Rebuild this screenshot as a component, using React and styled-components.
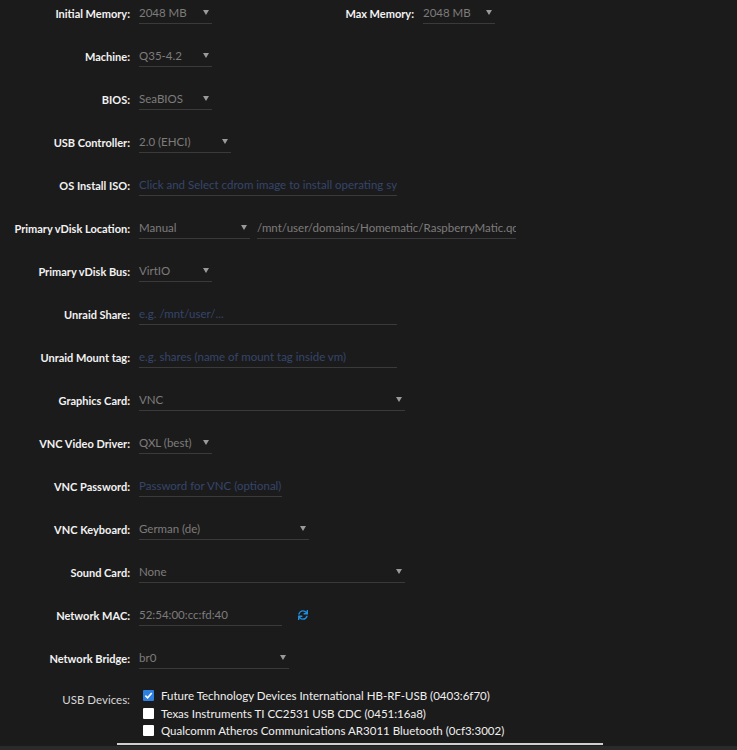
import React from "react";
import styled, { createGlobalStyle } from "styled-components";
import { FaSync } from "react-icons/fa";

const GlobalStyle = createGlobalStyle`
  html, body {
    margin: 0;
    padding: 0;
    background: #1c1b1b;
  }
  body {
    font-family: Lato, "Open Sans", sans-serif;
    font-size: 11px;
  }
`;

// whole settings panel
const Page = styled.div`
  width: 737px;
  height: 750px;
  overflow: hidden;
  background: #1c1b1b;
  display: flex;
  flex-direction: column;
`;

const Form = styled.div`
  display: flex;
  flex-direction: column;
  gap: 21px;
  padding-top: 2px;
  flex-shrink: 0;
`;

const Row = styled.div`
  display: flex;
  align-items: center;
  height: 22px;
`;

const Pair = styled.div`
  display: flex;
  align-items: center;
  height: 100%;
  margin-left: ${props => props.offset || "0px"};
`;

const Label = styled.div`
  width: ${props => props.width || "130px"};
  text-align: right;
  font-weight: 700;
  color: #f2f2f2;
  margin-right: 9px;
  white-space: nowrap;
`;

// underlined field, used for selects and text inputs
const Field = styled.div`
  position: relative;
  box-sizing: border-box;
  width: ${props => props.width};
  height: 22px;
  display: flex;
  align-items: center;
  border-bottom: 1px solid #3a3a3a;
  color: ${props => (props.placeholder ? "#34466b" : "#7c7c7c")};
  font-size: 11.5px;
  white-space: nowrap;
  overflow: hidden;
  padding-right: ${props => (props.select ? "12px" : "0")};
  margin-left: ${props => props.gap || "0"};
`;

const Caret = styled.span`
  position: absolute;
  right: 3px;
  top: 8px;
  width: 0;
  height: 0;
  border-left: 3px solid transparent;
  border-right: 3px solid transparent;
  border-top: 5px solid #9a9a9a;
`;

const Refresh = styled(FaSync)`
  color: #1f8fe0;
  font-size: 10px;
  margin-left: 16px;
`;

const DeviceRow = styled.div`
  display: flex;
  align-items: flex-start;
  margin-top: 18px;
  flex-shrink: 0;
`;

const DeviceLabel = styled.div`
  width: 130px;
  text-align: right;
  color: #d8d8d8;
  font-size: 11.5px;
  margin-right: 13px;
  padding-top: 6px;
`;

const DeviceList = styled.div`
  display: flex;
  flex-direction: column;
  gap: 2.5px;
  padding-top: 1px;
`;

const Device = styled.div`
  display: flex;
  align-items: center;
  height: 15px;
  color: #efefef;
  font-size: 11.5px;
`;

const Box = styled.span`
  box-sizing: border-box;
  width: 11px;
  height: 11px;
  margin-right: 7px;
  border-radius: 1px;
  background: ${props => (props.checked ? "#2d7fe0" : "#ffffff")};
  display: flex;
  align-items: center;
  justify-content: center;
`;

const Divider = styled.div`
  width: 486px;
  height: 2px;
  background: #cfcfcf;
  margin-left: 117px;
  margin-top: 5px;
  flex-shrink: 0;
`;

// darker strip where the next section starts
const Footer = styled.div`
  flex: 1 0 4px;
  background: #2a2a2a;
  margin-top: 1px;
`;

const Select = ({ width, children, gap }) => (
  <Field width={width} select gap={gap}>
    {children}
    <Caret />
  </Field>
);

const Check = () => (
  <svg width="9" height="9" viewBox="0 0 10 10">
    <path d="M1.5 5.2 L4 7.6 L8.6 2.2" fill="none" stroke="#fff" strokeWidth="1.8" />
  </svg>
);

const devices = [
  { name: "Future Technology Devices International HB-RF-USB (0403:6f70)", checked: true },
  { name: "Texas Instruments TI CC2531 USB CDC (0451:16a8)", checked: false },
  { name: "Qualcomm Atheros Communications AR3011 Bluetooth (0cf3:3002)", checked: false },
];

const App = () => (
  <Page>
    <GlobalStyle />
    <Form>
      <Row>
        <Pair>
          <Label>Initial Memory:</Label>
          <Select width="73px">2048 MB</Select>
        </Pair>
        <Pair offset="72px">
          <Label>Max Memory:</Label>
          <Select width="72px">2048 MB</Select>
        </Pair>
      </Row>
      <Row>
        <Label>Machine:</Label>
        <Select width="73px">Q35-4.2</Select>
      </Row>
      <Row>
        <Label>BIOS:</Label>
        <Select width="73px">SeaBIOS</Select>
      </Row>
      <Row>
        <Label>USB Controller:</Label>
        <Select width="92px">2.0 (EHCI)</Select>
      </Row>
      <Row>
        <Label>OS Install ISO:</Label>
        <Field width="258px" placeholder>Click and Select cdrom image to install operating system</Field>
      </Row>
      <Row>
        <Label>Primary vDisk Location:</Label>
        <Select width="111px">Manual</Select>
        <Field width="259px" gap="7px">/mnt/user/domains/Homematic/RaspberryMatic.qcow2</Field>
      </Row>
      <Row>
        <Label>Primary vDisk Bus:</Label>
        <Select width="73px">VirtIO</Select>
      </Row>
      <Row>
        <Label>Unraid Share:</Label>
        <Field width="258px" placeholder>e.g. /mnt/user/...</Field>
      </Row>
      <Row>
        <Label>Unraid Mount tag:</Label>
        <Field width="258px" placeholder>e.g. shares (name of mount tag inside vm)</Field>
      </Row>
      <Row>
        <Label>Graphics Card:</Label>
        <Select width="266px">VNC</Select>
      </Row>
      <Row>
        <Label>VNC Video Driver:</Label>
        <Select width="73px">QXL (best)</Select>
      </Row>
      <Row>
        <Label>VNC Password:</Label>
        <Field width="143px" placeholder>Password for VNC (optional)</Field>
      </Row>
      <Row>
        <Label>VNC Keyboard:</Label>
        <Select width="170px">German (de)</Select>
      </Row>
      <Row>
        <Label>Sound Card:</Label>
        <Select width="266px">None</Select>
      </Row>
      <Row>
        <Label>Network MAC:</Label>
        <Field width="143px">52:54:00:cc:fd:40</Field>
        <Refresh />
      </Row>
      <Row>
        <Label>Network Bridge:</Label>
        <Select width="150px">br0</Select>
      </Row>
    </Form>
    <DeviceRow>
      <DeviceLabel>USB Devices:</DeviceLabel>
      <DeviceList>
        {devices.map(d => (
          <Device key={d.name}>
            <Box checked={d.checked}>{d.checked && <Check />}</Box>
            {d.name}
          </Device>
        ))}
      </DeviceList>
    </DeviceRow>
    <Divider />
    <Footer />
  </Page>
);

export default App;
